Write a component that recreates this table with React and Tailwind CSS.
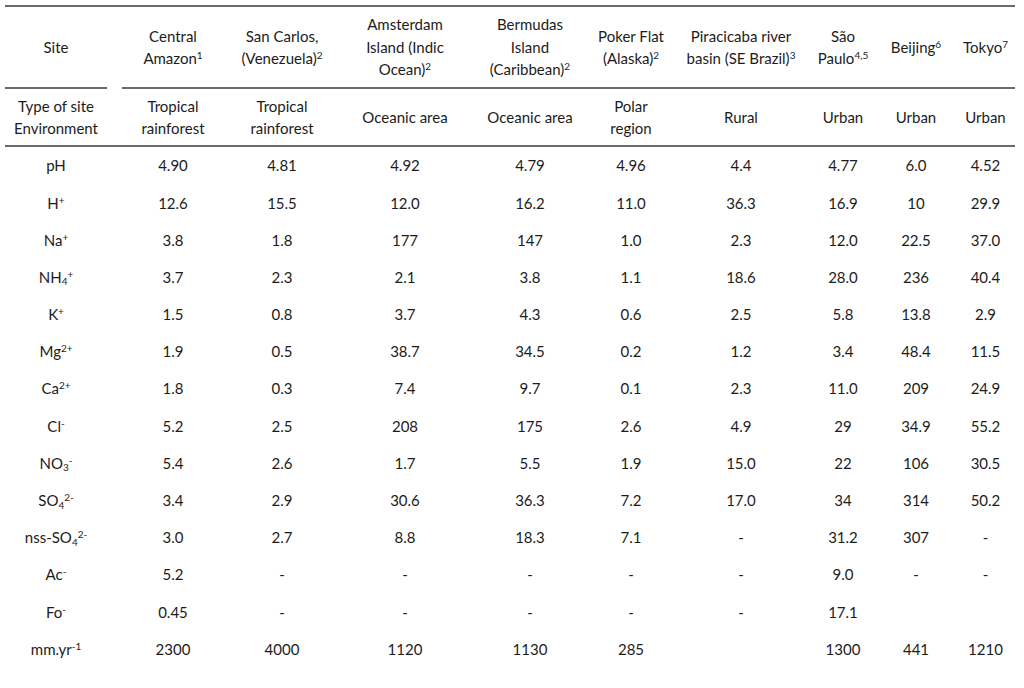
import React from "react";

const cols = "grid-cols-[102px_15px_102px_116px_130px_120px_82px_138px_66px_80px_59px]";

const Sup = ({ children }) => <sup className="text-[10px]">{children}</sup>;
const Sub = ({ children }) => <sub className="text-[10px]">{children}</sub>;

const headers = [
  <>Central<br />Amazon<Sup>1</Sup></>,
  <>San Carlos,<br />(Venezuela)<Sup>2</Sup></>,
  <>Amsterdam<br />Island (Indic<br />Ocean)<Sup>2</Sup></>,
  <>Bermudas<br />Island<br />(Caribbean)<Sup>2</Sup></>,
  <>Poker Flat<br />(Alaska)<Sup>2</Sup></>,
  <>Piracicaba river<br />basin (SE Brazil)<Sup>3</Sup></>,
  <>São<br />Paulo<Sup>4,5</Sup></>,
  <>Beijing<Sup>6</Sup></>,
  <>Tokyo<Sup>7</Sup></>,
];

const envs = [
  <>Tropical<br />rainforest</>,
  <>Tropical<br />rainforest</>,
  <>Oceanic area</>,
  <>Oceanic area</>,
  <>Polar<br />region</>,
  <>Rural</>,
  <>Urban</>,
  <>Urban</>,
  <>Urban</>,
];

const rows = [
  [<>pH</>, ["4.90", "4.81", "4.92", "4.79", "4.96", "4.4", "4.77", "6.0", "4.52"]],
  [<>H<Sup>+</Sup></>, ["12.6", "15.5", "12.0", "16.2", "11.0", "36.3", "16.9", "10", "29.9"]],
  [<>Na<Sup>+</Sup></>, ["3.8", "1.8", "177", "147", "1.0", "2.3", "12.0", "22.5", "37.0"]],
  [<>NH<Sub>4</Sub><Sup>+</Sup></>, ["3.7", "2.3", "2.1", "3.8", "1.1", "18.6", "28.0", "236", "40.4"]],
  [<>K<Sup>+</Sup></>, ["1.5", "0.8", "3.7", "4.3", "0.6", "2.5", "5.8", "13.8", "2.9"]],
  [<>Mg<Sup>2+</Sup></>, ["1.9", "0.5", "38.7", "34.5", "0.2", "1.2", "3.4", "48.4", "11.5"]],
  [<>Ca<Sup>2+</Sup></>, ["1.8", "0.3", "7.4", "9.7", "0.1", "2.3", "11.0", "209", "24.9"]],
  [<>Cl<Sup>-</Sup></>, ["5.2", "2.5", "208", "175", "2.6", "4.9", "29", "34.9", "55.2"]],
  [<>NO<Sub>3</Sub><Sup>-</Sup></>, ["5.4", "2.6", "1.7", "5.5", "1.9", "15.0", "22", "106", "30.5"]],
  [<>SO<Sub>4</Sub><Sup>2-</Sup></>, ["3.4", "2.9", "30.6", "36.3", "7.2", "17.0", "34", "314", "50.2"]],
  [<>nss-SO<Sub>4</Sub><Sup>2-</Sup></>, ["3.0", "2.7", "8.8", "18.3", "7.1", "-", "31.2", "307", "-"]],
  [<>Ac<Sup>-</Sup></>, ["5.2", "-", "-", "-", "-", "-", "9.0", "-", "-"]],
  [<>Fo<Sup>-</Sup></>, ["0.45", "-", "-", "-", "-", "-", "17.1", "", ""]],
  [<>mm.yr<Sup>-1</Sup></>, ["2300", "4000", "1120", "1130", "285", "", "1300", "441", "1210"]],
];

export default function App() {
  return (
    <div
      className="w-[1024px] h-[688px] bg-white pt-[5px] pl-[5px] text-[#1c1c1c] text-[15px] overflow-hidden"
      style={{ fontFamily: "Lato, 'Open Sans', sans-serif" }}
    >
      <div className={`grid ${cols} w-[1010px] border-t-2 border-[#6a6a6a]`}>
        {/* header row */}
        <div className="h-[82px] border-b-2 border-[#6a6a6a] flex items-center justify-center text-center leading-[22.5px]">
          Site
        </div>
        <div className="h-[82px]" />
        {headers.map((h, i) => (
          <div
            key={i}
            className="h-[82px] border-b-2 border-[#6a6a6a] flex items-center justify-center text-center leading-[22.5px] whitespace-nowrap"
          >
            <div>{h}</div>
          </div>
        ))}

        {/* environment row */}
        <div className="h-[58px] border-b-2 border-[#6a6a6a] flex items-center justify-center text-center leading-[22.5px]">
          <div>
            Type of site
            <br />
            Environment
          </div>
        </div>
        <div className="h-[58px] border-b-2 border-[#6a6a6a]" />
        {envs.map((e, i) => (
          <div
            key={i}
            className="h-[58px] border-b-2 border-[#6a6a6a] flex items-center justify-center text-center leading-[22.5px] whitespace-nowrap"
          >
            <div>{e}</div>
          </div>
        ))}

        {/* data rows */}
        {rows.map(([label, vals], r) => (
          <React.Fragment key={r}>
            <div className="h-[37.2px] flex items-center justify-center whitespace-nowrap">
              <span>{label}</span>
            </div>
            <div className="h-[37.2px]" />
            {vals.map((v, c) => (
              <div key={c} className="h-[37.2px] flex items-center justify-center">
                {v}
              </div>
            ))}
          </React.Fragment>
        ))}
      </div>
    </div>
  );
}
